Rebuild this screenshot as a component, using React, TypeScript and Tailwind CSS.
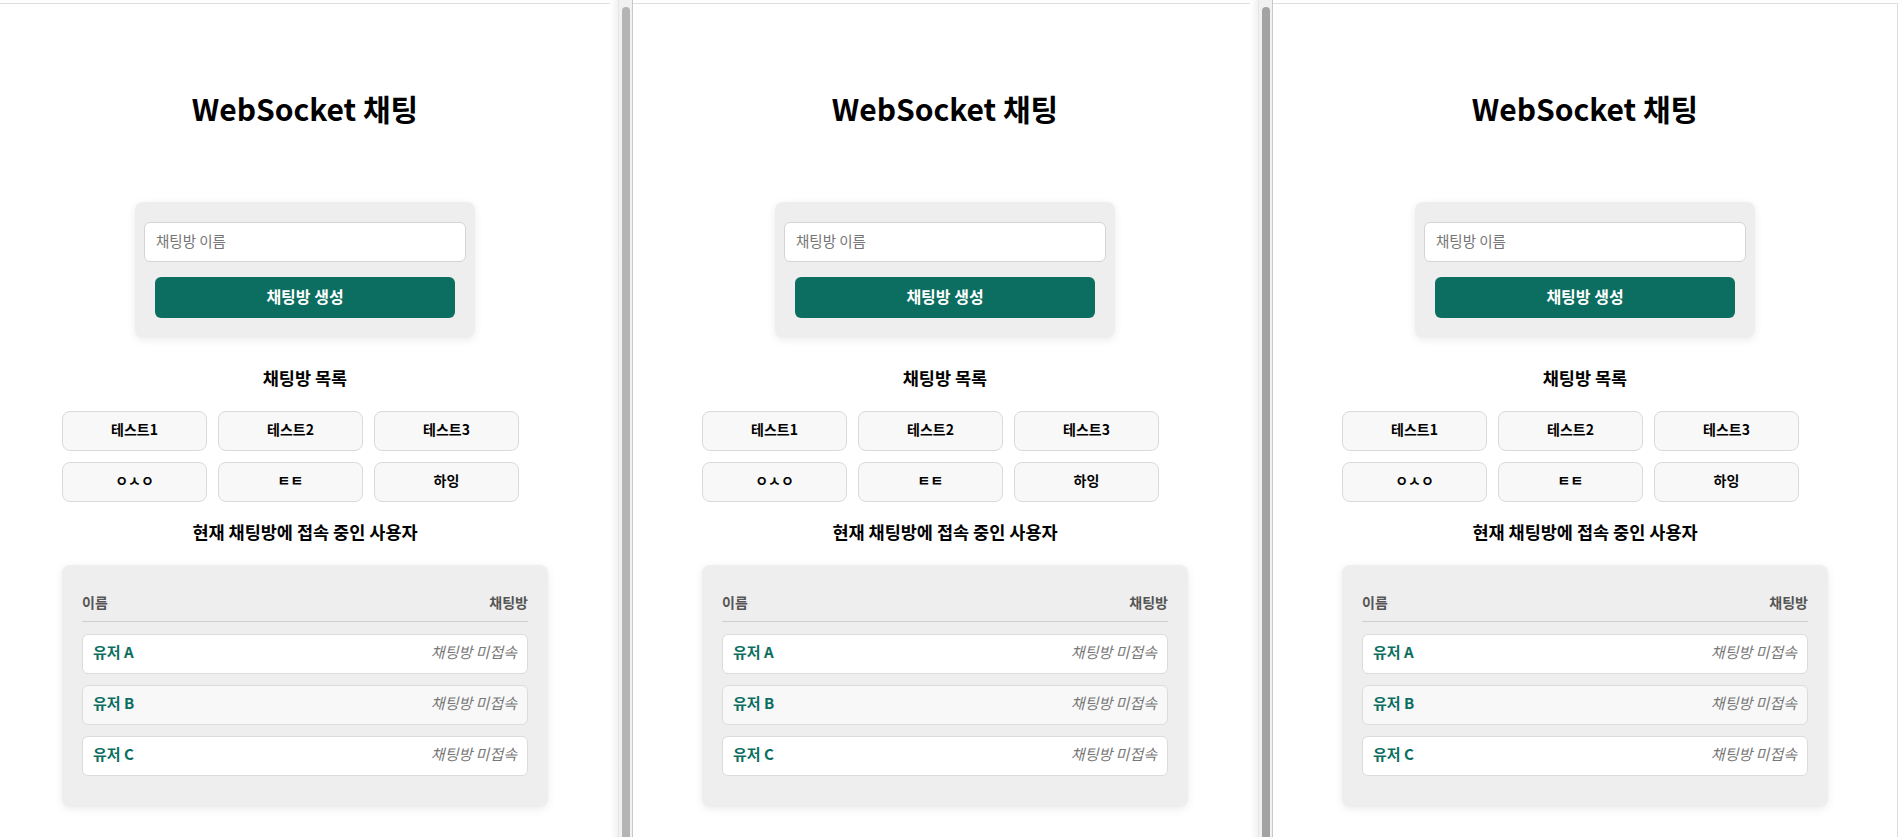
import React from "react";

const FONT = { fontFamily: '"Noto Sans CJK KR", "Noto Sans", sans-serif' };

const rooms = ["테스트1", "테스트2", "테스트3", "ㅇㅅㅇ", "ㅌㅌ", "하잉"];
const users = ["유저 A", "유저 B", "유저 C"];

function Inner() {
  return (
    <>
      <h1 className="mt-[84px] text-[30px] font-bold leading-[40px] text-black">WebSocket 채팅</h1>

      <div className="mt-[74px] flex w-[340px] flex-col items-center rounded-[8px] bg-[#eeeeee] p-[20px] shadow-[0_2px_8px_rgba(0,0,0,0.08)]">
        <div className="flex h-[40px] w-[322px] shrink-0 items-center rounded-[6px] border border-[#d4d4d4] bg-white px-[11px] pb-[2px] text-[14.5px] text-[#757575]">
          채팅방 이름
        </div>
        <div className="mt-[15px] flex h-[41px] w-[300px] items-center justify-center rounded-[6px] bg-[#0b6e60] pb-[3px] text-[16px] font-semibold text-white">
          채팅방 생성
        </div>
      </div>

      <h2 className="mt-[28px] text-[17.5px] font-bold leading-[24px] text-black">채팅방 목록</h2>

      <div className="mt-[21px] w-[486px]">
        <div className="grid grid-cols-[repeat(3,145px)] gap-[11px]">
          {rooms.map((r) => (
            <div
              key={r}
              className="flex h-[40px] items-center justify-center rounded-[8px] border border-[#dadada] bg-[#f8f8f8] pb-[3px] text-[14px] font-bold text-black"
            >
              {r}
            </div>
          ))}
        </div>
      </div>

      <h2 className="mt-[18px] text-[17.5px] font-bold leading-[24px] text-black">현재 채팅방에 접속 중인 사용자</h2>

      <div className="mt-[21px] w-[486px] rounded-[8px] bg-[#eeeeee] px-[20px] pt-[20px] pb-[20px] shadow-[0_2px_8px_rgba(0,0,0,0.08)]">
        <div className="mb-[12px] flex items-center justify-between border-b border-[#d0d0d0] pt-[7px] pb-[9px] text-[14px] font-bold leading-[20px] text-[#555555]">
          <span>이름</span>
          <span>채팅방</span>
        </div>
        {users.map((u, i) => (
          <div
            key={u}
            className={`mb-[11px] flex h-[40px] items-center justify-between rounded-[6px] border border-[#dcdcdc] px-[10px] pb-[3px] ${
              i === 1 ? "bg-[#f8f8f8]" : "bg-white"
            }`}
          >
            <span className="text-[15px] font-bold text-[#0b6e60]">{u}</span>
            <span className="text-[15px] italic text-[#777777]">채팅방 미접속</span>
          </div>
        ))}
      </div>
    </>
  );
}

function Panel({ thumb }: { thumb: string }) {
  return (
    <div className="flex h-full w-[640px] shrink-0">
      <div className="mt-[3px] flex h-full w-[610px] flex-col items-center border-t border-[#dddddd] bg-white">
        <Inner />
      </div>
      <div className="h-full w-[8px] bg-gradient-to-r from-white to-[#f2f2f2]" />
      <div className="flex h-full w-[15px] justify-center border-l border-r border-l-[#e6e6e6] border-r-[#c8c8c8] bg-[#f1f1f1] pt-[7px]">
        <div className={`h-full w-[8px] rounded-t-[4px] ${thumb}`} />
      </div>
      <div className="mt-[3px] h-full w-[7px] border-t border-[#dddddd] bg-white" />
    </div>
  );
}

export default function App() {
  return (
    <div className="flex h-[837px] w-[1900px] overflow-hidden bg-white" style={FONT}>
      <Panel thumb="bg-[#b4b4b4]" />
      <Panel thumb="bg-[#a3a3a3]" />
      <div className="flex h-full w-[620px] shrink-0">
        <div className="mt-[3px] flex h-full w-[610px] flex-col items-center border-t border-[#dddddd] bg-white">
          <Inner />
        </div>
        <div className="mt-[3px] h-full w-[8px] border-t border-r border-[#dddddd] bg-white" />
      </div>
    </div>
  );
}
